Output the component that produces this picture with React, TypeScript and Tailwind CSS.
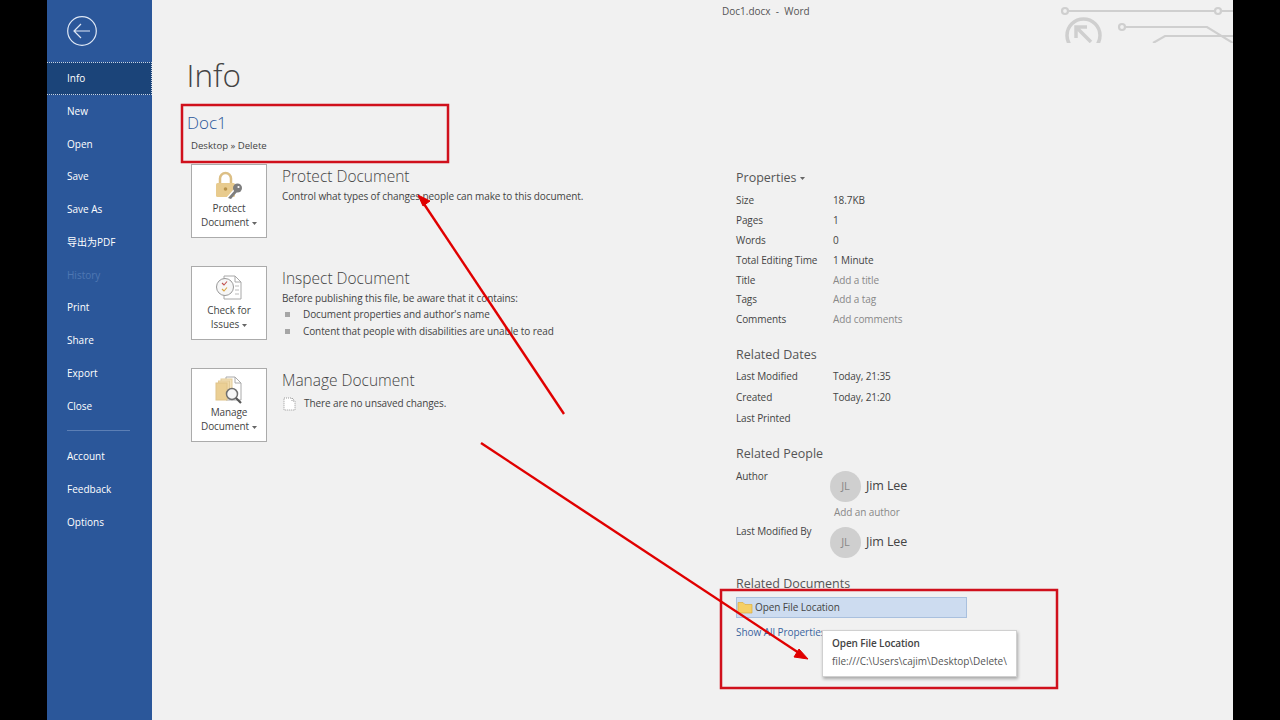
import type { ReactNode } from "react";

const navTop = ["New", "Open", "Save", "Save As", "导出为PDF"];
const navMid = ["Print", "Share", "Export", "Close"];
const navBottom = ["Account", "Feedback", "Options"];

const Caret = () => (
  <svg width="5" height="3" viewBox="0 0 5 3" className="inline-block ml-[3px] align-middle">
    <path d="M0 0h5L2.5 3z" fill="#666" />
  </svg>
);

const NavItem = ({ label, muted }: { label: string; muted?: boolean }) => (
  <div className={"h-[32.75px] pl-5 flex items-center text-[10px] " + (muted ? "text-[#4f77b3]" : "text-white")}>
    {label}
  </div>
);

const LockIcon = () => (
  <svg width="32" height="30" viewBox="0 0 32 30">
    <path d="M7 13V7.5a5.5 5.5 0 0 1 11 0V13" fill="none" stroke="#dcbf85" strokeWidth="2.5" />
    <rect x="3" y="12" width="19" height="14" rx="1.5" fill="#e8cb8e" />
    <circle cx="12.5" cy="18" r="1.8" fill="#b8934c" />
    <path d="M13 27l8-9 3 3-8 8z" fill="#fff" />
    <path d="M15 27l7-8 2 2-6 7z" fill="#7d7d7d" />
    <circle cx="24.5" cy="17" r="4.5" fill="#7d7d7d" />
    <circle cx="25.5" cy="16" r="1.1" fill="#fff" />
  </svg>
);

const IssuesIcon = () => (
  <svg width="28" height="26" viewBox="0 0 28 26">
    <path d="M9 1h11l6 6v17H9z" fill="#fff" stroke="#a8a8a8" />
    <path d="M20 1v6h6" fill="none" stroke="#a8a8a8" />
    <path d="M20 11h4M20 15h4M20 19h4" stroke="#bbb" />
    <circle cx="10" cy="12" r="8.5" fill="#f6f6f6" stroke="#999" />
    <path d="M7 8l2 2 3-3.5" fill="none" stroke="#c0504d" strokeWidth="1.1" />
    <path d="M7 14l2 2 3-3.5" fill="none" stroke="#d9a441" strokeWidth="1.1" />
  </svg>
);

const ManageIcon = () => (
  <svg width="28" height="28" viewBox="0 0 28 28">
    <path d="M11 1h9l6 6v17H11z" fill="#fff" stroke="#aaa" />
    <path d="M20 1v6h6" fill="none" stroke="#aaa" />
    <rect x="6" y="3" width="11" height="16" fill="#f4e3bd" stroke="#e3cb98" />
    <rect x="3.5" y="5" width="11" height="17" fill="#f0d9a8" stroke="#e3cb98" />
    <rect x="1" y="7" width="11" height="17" fill="#ebcf94" stroke="#e0c48a" />
    <circle cx="17" cy="18" r="5.5" fill="#f6f6f6" stroke="#6f6f6f" strokeWidth="1.5" />
    <path d="M21 22l5 5" stroke="#555" strokeWidth="2.2" />
  </svg>
);

const ActionCard = ({ icon, lines, title, children }: { icon: ReactNode; lines: string[]; title: string; children: ReactNode }) => (
  <div className="flex h-[74px] gap-[15px]">
    <div className="w-[76px] h-[74px] shrink-0 bg-white border border-[#ababab] flex flex-col items-center pt-[6px]">
      <div className="h-[30px] flex items-center justify-center">{icon}</div>
      <div className="text-[10px] tracking-[-0.1px] leading-[14px] text-[#444] text-center">
        {lines[0]}
        <br />
        {lines[1]}
        <Caret />
      </div>
    </div>
    <div className="pt-[1px] text-[10px] tracking-[-0.1px] text-[#444]">
      <div className="text-[15.5px] tracking-normal font-light leading-[22px] text-[#444]">{title}</div>
      <div className="mt-[2px]">{children}</div>
    </div>
  </div>
);

const Row = ({ label, value, link }: { label: string; value: string; link?: boolean }) => (
  <div className="flex h-[19.8px] items-center text-[10px] tracking-[-0.1px]">
    <div className="w-[97px] text-[#444]">{label}</div>
    <div className={link ? "text-[#888]" : "text-[#444]"}>{value}</div>
  </div>
);

const Heading = ({ children }: { children: ReactNode }) => (
  <div className="text-[12.5px] leading-[18px] text-[#555]">{children}</div>
);

const Person = () => (
  <div className="flex items-center gap-[5px]">
    <div className="w-[31px] h-[31px] rounded-full bg-[#cfcfcf] flex items-center justify-center text-[11px] text-[#888]">JL</div>
    <div className="text-[12.5px] text-[#444]">Jim Lee</div>
  </div>
);

export default function App() {
  return (
    <div className="w-[1280px] h-[720px] bg-black px-[47px] overflow-hidden font-['Open_Sans','Noto_Sans_CJK_SC',sans-serif]">
      <div className="relative flex h-full bg-[#f1f1f1]">
        <aside className="w-[105px] shrink-0 bg-[#2b579a] flex flex-col">
          <div className="h-[62px] pl-5 pt-[16px]">
            <svg width="30" height="30" viewBox="0 0 30 30">
              <circle cx="15" cy="15" r="14.3" fill="none" stroke="#dfe8f5" strokeWidth="1.2" />
              <path d="M7 15h16M14 8l-7 7 7 7" fill="none" stroke="#dfe8f5" strokeWidth="1.2" />
            </svg>
          </div>
          <div className="h-[33px] pl-5 flex items-center text-[10px] text-white bg-[#1b4479] border-y border-r border-dotted border-[#c7d3e6]">
            Info
          </div>
          {navTop.map((n) => (
            <NavItem key={n} label={n} />
          ))}
          <NavItem label="History" muted />
          {navMid.map((n) => (
            <NavItem key={n} label={n} />
          ))}
          <div className="h-[1px] w-[63px] ml-5 mt-[7px] mb-[10px] bg-[#5c7fb5]" />
          {navBottom.map((n) => (
            <NavItem key={n} label={n} />
          ))}
        </aside>

        <main className="flex-1 flex flex-col">
          <div className="h-[22px] pl-[570px] flex items-center text-[10px] text-[#555] whitespace-pre">Doc1.docx  -  Word</div>
          <div className="flex flex-1">
            <section className="w-[584px] shrink-0 pl-[35px]">
              <h1 className="mt-[31px] text-[31.5px] leading-[44px] font-light text-[#444] -ml-[0.5px]">Info</h1>
              <div className="mt-[14px] text-[17px] font-light leading-[24px] text-[#2b579a]">Doc1</div>
              <div className="mt-[4px] ml-[4px] text-[9.6px] leading-[14px] text-[#444]">Desktop » Delete</div>
              <div className="ml-[4px] mt-[11px] flex flex-col gap-[28px]">
                <ActionCard icon={<LockIcon />} lines={["Protect", "Document"]} title="Protect Document">
                  <div>Control what types of changes people can make to this document.</div>
                </ActionCard>
                <ActionCard icon={<IssuesIcon />} lines={["Check for", "Issues"]} title="Inspect Document">
                  <div className="leading-[15px]">Before publishing this file, be aware that it contains:</div>
                  <div className="flex items-center h-[17px] gap-[13px] pl-[3px]">
                    <span className="w-[5px] h-[5px] shrink-0 bg-[#a6a6a6]" />
                    Document properties and author's name
                  </div>
                  <div className="flex items-center h-[17px] gap-[13px] pl-[3px]">
                    <span className="w-[5px] h-[5px] shrink-0 bg-[#a6a6a6]" />
                    Content that people with disabilities are unable to read
                  </div>
                </ActionCard>
                <ActionCard icon={<ManageIcon />} lines={["Manage", "Document"]} title="Manage Document">
                  <div className="flex items-center gap-[8px] mt-[5px] pl-[1px]">
                    <svg width="13" height="14" viewBox="0 0 13 14">
                      <path d="M1 1h8l3 3v9H1z" fill="#fff" stroke="#999" strokeDasharray="1 1" />
                      <path d="M9 1v3h3" fill="none" stroke="#999" strokeDasharray="1 1" />
                    </svg>
                    There are no unsaved changes.
                  </div>
                </ActionCard>
              </div>
            </section>

            <section className="flex-1 pt-[147px]">
              <Heading>
                Properties
                <Caret />
              </Heading>
              <div className="mt-[4px]">
                <Row label="Size" value="18.7KB" />
                <Row label="Pages" value="1" />
                <Row label="Words" value="0" />
                <Row label="Total Editing Time" value="1 Minute" />
                <Row label="Title" value="Add a title" link />
                <Row label="Tags" value="Add a tag" link />
                <Row label="Comments" value="Add comments" link />
              </div>
              <div className="mt-[16px]">
                <Heading>Related Dates</Heading>
              </div>
              <div className="mt-[2px] [&>div]:h-[21px]">
                <Row label="Last Modified" value="Today, 21:35" />
                <Row label="Created" value="Today, 21:20" />
                <Row label="Last Printed" value="" />
              </div>
              <div className="mt-[16px]">
                <Heading>Related People</Heading>
              </div>
              <div className="flex mt-[5px] text-[10px] tracking-[-0.1px] text-[#444]">
                <div className="w-[94px] pt-[1px]">Author</div>
                <div className="pt-[3px]">
                  <Person />
                </div>
              </div>
              <div className="ml-[98px] mt-[3px] text-[10px] tracking-[-0.1px] leading-[14px] text-[#888]">Add an author</div>
              <div className="flex mt-[1px] text-[10px] tracking-[-0.1px] text-[#444]">
                <div className="w-[94px] pt-[4px]">Last Modified By</div>
                <div className="pt-[7px]">
                  <Person />
                </div>
              </div>
              <div className="mt-[17px]">
                <Heading>Related Documents</Heading>
              </div>
              <div className="mt-[4px] w-[231px] h-[21px] bg-[#cddcf0] border border-[#a9c0de] flex items-center text-[10px] tracking-[-0.1px] text-[#444]">
                <svg width="16" height="13" viewBox="0 0 16 13" className="mr-[2px] shrink-0">
                  <path d="M1 1.5h5l2 2h7v8.5H1z" fill="#f5cf66" stroke="#dcae3f" strokeWidth="0.7" />
                </svg>
                Open File Location
              </div>
              <div className="mt-[7px] text-[10px] tracking-[-0.05px] leading-[14px] text-[#3b659f]">Show All Properties</div>
            </section>
          </div>
        </main>

        {/* circuit decoration */}
        <svg width="175" height="43" viewBox="0 0 175 43" className="absolute top-0 right-0" fill="none" stroke="#cfcfcf" strokeWidth="2.2">
          <circle cx="7" cy="11" r="3" />
          <path d="M10 11h165" />
          <circle cx="160" cy="11" r="3" fill="#f1f1f1" />
          <circle cx="64" cy="27" r="3" />
          <path d="M67 27h82l26 16M95 43l12-7h68" />
          <circle cx="25.5" cy="35.5" r="16.5" strokeWidth="3.5" />
          <path d="M29 27H18v11M18 27l15 15" strokeWidth="3.5" />
        </svg>

        {/* red annotations */}
        <svg width="1186" height="720" viewBox="0 0 1186 720" className="absolute inset-0 pointer-events-none" fill="none">
          <rect x="135" y="105" width="266" height="57" stroke="#d0101c" strokeWidth="2.5" />
          <rect x="674" y="590" width="336" height="98" stroke="#d0101c" strokeWidth="2.5" />
          <path d="M517 414L375 201" stroke="#e00000" strokeWidth="2.4" />
          <path d="M371 195l12 6-7 5z" fill="#e00000" stroke="#e00000" />
          <path d="M434 443L752 653" stroke="#e00000" strokeWidth="2.4" />
          <path d="M761 659l-14-2 5-8z" fill="#e00000" stroke="#e00000" />
        </svg>

        {/* tooltip */}
        <div className="absolute left-[775px] top-[630px] w-[195px] h-[47px] bg-white border border-[#d0d0d0] shadow-[1px_2px_3px_rgba(0,0,0,0.3)] pl-[9px] pt-[5px]">
          <div className="text-[10px] tracking-[-0.1px] leading-[14px] font-semibold text-[#444]">Open File Location</div>
          <div className="text-[10px] leading-[14px] mt-[4px] text-[#555]">file:///C:\Users\cajim\Desktop\Delete\</div>
        </div>
      </div>
    </div>
  );
}
